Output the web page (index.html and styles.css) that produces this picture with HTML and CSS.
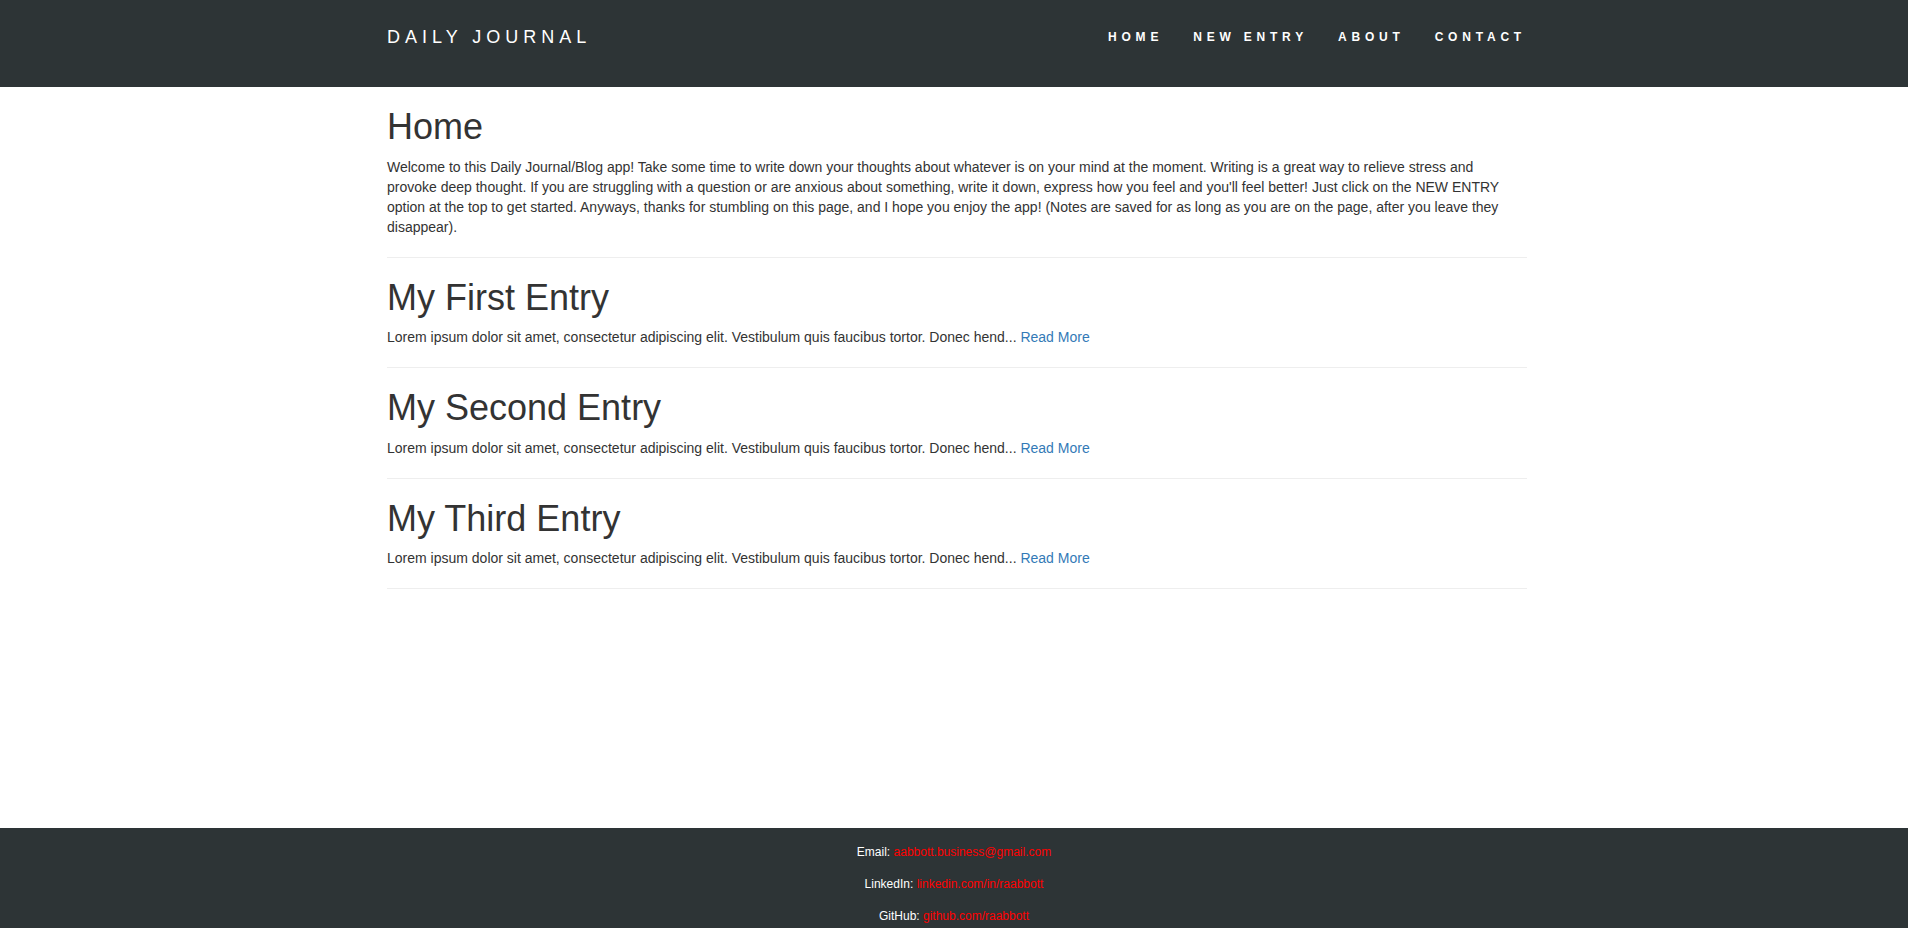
FILE: index.html
```html
<!DOCTYPE html>
<html lang="en">
<head>
<meta charset="utf-8">
<title>Daily Journal</title>
<link rel="stylesheet" href="styles.css">
</head>
<body>
<div class="page">
  <nav class="navbar">
    <div class="container nav-inner">
      <a class="brand" href="#">DAILY JOURNAL</a>
      <ul class="nav-links">
        <li><a href="#">HOME</a></li>
        <li><a href="#">NEW ENTRY</a></li>
        <li><a href="#">ABOUT</a></li>
        <li><a href="#">CONTACT</a></li>
      </ul>
    </div>
  </nav>
  <main class="container main">
    <h1>Home</h1>
    <p class="intro">Welcome to this Daily Journal/Blog app! Take some time to write down your thoughts about whatever is on your mind at the moment. Writing is a great way to relieve stress and provoke deep thought. If you are struggling with a question or are anxious about something, write it down, express how you feel and you'll feel better! Just click on the NEW ENTRY option at the top to get started. Anyways, thanks for stumbling on this page, and I hope you enjoy the app! (Notes are saved for as long as you are on the page, after you leave they disappear).</p>
    <hr>
    <h1>My First Entry</h1>
    <p>Lorem ipsum dolor sit amet, consectetur adipiscing elit. Vestibulum quis faucibus tortor. Donec hend... <a class="more" href="#">Read More</a></p>
    <hr>
    <h1>My Second Entry</h1>
    <p>Lorem ipsum dolor sit amet, consectetur adipiscing elit. Vestibulum quis faucibus tortor. Donec hend... <a class="more" href="#">Read More</a></p>
    <hr>
    <h1>My Third Entry</h1>
    <p>Lorem ipsum dolor sit amet, consectetur adipiscing elit. Vestibulum quis faucibus tortor. Donec hend... <a class="more" href="#">Read More</a></p>
    <hr>
  </main>
  <footer class="footer">
    <p>Email: <a href="#">aabbott.business@gmail.com</a></p>
    <p>LinkedIn: <a href="#">linkedin.com/in/raabbott</a></p>
    <p>GitHub: <a href="#">github.com/raabbott</a></p>
  </footer>
</div>
</body>
</html>
```
FILE: styles.css
```css
* { box-sizing: border-box; }
html, body { margin: 0; padding: 0; }
body {
  font-family: "Liberation Sans", Arial, Helvetica, sans-serif;
  font-size: 14px;
  line-height: 20px;
  color: #333;
  background: #fff;
}
.page {
  min-height: 100vh;
  display: flex;
  flex-direction: column;
}
.container {
  width: 1140px;
  margin-left: calc(50% - 567px);
}
.navbar {
  background: #2d3436;
  height: 87px;
  padding-top: 27px;
}
.nav-inner {
  display: flex;
  justify-content: space-between;
  align-items: flex-start;
}
.brand {
  color: #fff;
  text-decoration: none;
  font-size: 18px;
  line-height: 20px;
  letter-spacing: 5px;
}
.nav-links {
  list-style: none;
  margin: 0 -14px 0 0;
  padding: 0;
  display: flex;
}
.nav-links a {
  display: block;
  padding: 0 15px;
  color: #fff;
  text-decoration: none;
  font-size: 12px;
  line-height: 20px;
  font-weight: bold;
  letter-spacing: 4.8px;
}
.main {
  flex: 1;
  padding-top: 20px;
  padding-bottom: 20px;
}
h1 {
  font-size: 36px;
  font-weight: 500;
  line-height: 1.1;
  margin: 0 0 10px;
  color: #333;
}
p { margin: 0; }
.intro { padding-right: 15px; }
hr {
  border: 0;
  border-top: 1px solid #eee;
  margin: 20px 0;
  height: 0;
}
.more {
  color: #337ab7;
  text-decoration: none;
}
.footer {
  background: #2d3436;
  height: 100px;
  padding-top: 8px;
  text-align: center;
  font-size: 12px;
  color: #fff;
}
.footer p {
  margin: 0;
  line-height: 32px;
}
.footer a {
  color: #f00;
  text-decoration: none;
}
```
